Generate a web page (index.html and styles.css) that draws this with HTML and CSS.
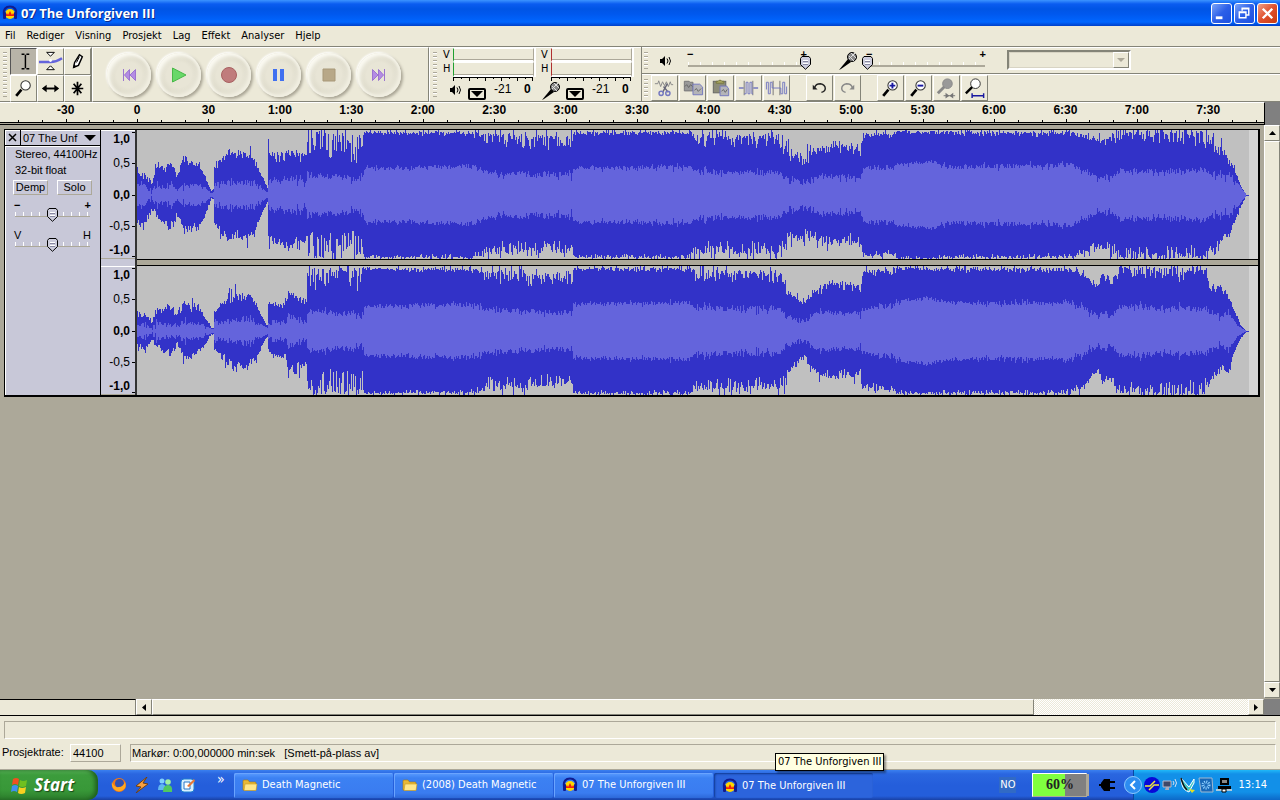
FILE: index.html
```html
<!DOCTYPE html>
<html lang="no">
<head>
<meta charset="utf-8">
<title>07 The Unforgiven III</title>
<link rel="stylesheet" href="styles.css">
</head>
<body>
<svg class="defs" aria-hidden="true">
  <defs>
    <symbol id="audacity" viewBox="0 0 16 16">
      <path d="M2 10C1 4 4 1.500 8 1.500S15 4 14 10" fill="none" stroke="#101c90" stroke-width="2"/>
      <circle cx="8" cy="9" r="5" fill="#ffd800"/>
      <path d="M3 11L5 8L6 10L8 6L10 10L11 8L13 11Z" fill="#f02010"/>
      <rect x="1" y="7" width="3" height="7" rx="1" fill="#101c90"/>
      <rect x="12" y="7" width="3" height="7" rx="1" fill="#101c90"/>
    </symbol>
    <symbol id="speaker" viewBox="0 0 14 14">
      <path d="M1 5h2l3-3v10l-3-3H1z" fill="#000"/>
      <path d="M8 4.500q2 2.500 0 5M10 3q3 4 0 8" fill="none" stroke="#000"/>
    </symbol>
    <symbol id="mic" viewBox="0 0 20 20">
      <path d="M1 19L10 8L13 11L3 18Z" fill="#000"/>
      <circle cx="14" cy="6" r="4.500" fill="#888" stroke="#000"/>
      <path d="M11 5l5 5M13 2l5 5M11 8l6-6" stroke="#ddd" stroke-width="1"/>
    </symbol>
    <symbol id="lens" viewBox="0 0 24 24">
      <path d="M5 19L10 13" stroke="#000" stroke-width="2.500"/>
      <circle cx="14" cy="9" r="4.500" fill="#fff" stroke="#333" stroke-width="1"/>
    </symbol>
    <symbol id="folder" viewBox="0 0 16 16">
      <path d="M1 13V4q0-1 1-1h4l1.500 2H13q1 0 1 1v7z" fill="#e8b838" stroke="#a87808" stroke-width=".6"/>
      <path d="M2 13.500L3 7h12l-1 6.500z" fill="#ffe78a" stroke="#c89a20" stroke-width=".6"/>
    </symbol>
    <symbol id="prev" viewBox="0 0 16 16">
      <path d="M2.500 2v12M8.500 2.500v11L3.500 8zM14.500 2.500v11L9 8z" fill="#b48ce4" stroke="#9c74d0"/>
    </symbol>
  </defs>
</svg>

<div class="app">
  <header class="titlebar">
    <svg class="i16"><use href="#audacity"/></svg>
    <h1>07 The Unforgiven III</h1>
    <button class="win" aria-label="Minimer"><svg viewBox="0 0 20 20"><path d="M4 13h7v3H4z" fill="#fff"/></svg></button>
    <button class="win" aria-label="Gjenopprett"><svg viewBox="0 0 20 20" fill="none" stroke="#fff"><path d="M7.500 7V4.500h7v7H12M7 5h8M4.500 8.500h7v6h-7zM4 9h8" stroke-width="1.500"/></svg></button>
    <button class="win close" aria-label="Lukk"><svg viewBox="0 0 20 20"><path d="M5 5l10 10M15 5L5 15" stroke="#fff" stroke-width="2.500"/></svg></button>
  </header>

  <nav class="menu">
    <button>Fil</button><button>Rediger</button><button>Visning</button><button>Prosjekt</button><button>Lag</button><button>Effekt</button><button>Analyser</button><button>Hjelp</button>
  </nav>

  <section class="toolbars">
    <div class="bar tools">
      <i class="grip"></i>
      <div class="toolgrid">
        <button class="on" aria-label="Merking"><svg viewBox="0 0 26 26"><path d="M11 5.500h3M16 5.500h3M11 20.500h3M16 20.500h3M15 6v14" stroke="#000" stroke-width="1.500"/></svg></button>
        <button aria-label="Konvolutt"><svg viewBox="0 0 26 26"><path d="M9 3.500h8l-4 4zM9 21.500h8l-4-4z" fill="#fff" stroke="#000"/><path d="M1 13.500h12q6 0 12-4" fill="none" stroke="#6464dc" stroke-width="2.500"/><circle cx="13" cy="12" r="1.500" fill="#fff"/></svg></button>
        <button aria-label="Tegn"><svg viewBox="0 0 26 26"><path d="M9 19l1-5 5-8 3 2-4 9z" fill="#fff" stroke="#000" stroke-width="1.500"/><path d="M12 14l3-6" stroke="#000"/><path d="M9 20v-4l3 2z"/></svg></button>
        <button aria-label="Forstørr"><svg viewBox="0 0 26 26"><use href="#lens" width="26" height="26"/></svg></button>
        <button aria-label="Tidsskyv"><svg viewBox="0 0 26 26"><path d="M6 13h14" stroke="#000" stroke-width="2"/><path d="M4 13l5-4v8zM22 13l-5-4v8z"/></svg></button>
        <button aria-label="Multiverktøy"><svg viewBox="0 0 26 26"><path d="M13 6v14M7 13h12M9 8l8 10M17 8l-8 10" stroke="#000" stroke-width="1.800"/></svg></button>
      </div>
    </div>
    <div class="bar transport">
      <button aria-label="Til start"><svg><use href="#prev"/></svg></button>
      <button aria-label="Spill"><svg viewBox="0 0 16 16"><path d="M1.500 1v14L15 8z" fill="#68d868" stroke="#48b848"/></svg></button>
      <button aria-label="Ta opp"><svg viewBox="0 0 16 16"><circle cx="8" cy="8" r="7.500" fill="#c07c7c" stroke="#a86060"/></svg></button>
      <button aria-label="Pause"><svg viewBox="0 0 16 16"><path d="M2 2h4v12H2zM9 2h4v12H9z" fill="#4070f0"/></svg></button>
      <button aria-label="Stopp"><svg viewBox="0 0 16 16"><path d="M2 2h12v12H2z" fill="#b8a888" stroke="#a89878"/></svg></button>
      <button aria-label="Til slutt"><svg class="flip"><use href="#prev"/></svg></button>
    </div>
    <div class="bar meters">
      <i class="grip"></i>
      <div class="meter">
        <span class="ch">V</span><div class="level"></div>
        <span class="ch">H</span><div class="level"></div>
        <svg class="scale" viewBox="0 0 80 4" preserveAspectRatio="none"><path d="M0 .5h80M.5 0v4M16.500 0v4M32.500 0v4M48.500 0v4M64.500 0v4M79.500 0v4M8.500 0v2M24.500 0v2M40.500 0v2M56.500 0v2M72.500 0v2" stroke="#000"/></svg>
        <div class="under"><svg><use href="#speaker"/></svg><button class="drop" aria-label="Avspillingsmåler"><svg viewBox="0 0 12 6"><path d="M0 0h12L6 6z"/></svg></button><span>-21</span><b>0</b></div>
      </div>
      <div class="meter rec">
        <span class="ch">V</span><div class="level"></div>
        <span class="ch">H</span><div class="level"></div>
        <svg class="scale" viewBox="0 0 80 4" preserveAspectRatio="none"><path d="M0 .5h80M.5 0v4M16.500 0v4M32.500 0v4M48.500 0v4M64.500 0v4M79.500 0v4M8.500 0v2M24.500 0v2M40.500 0v2M56.500 0v2M72.500 0v2" stroke="#000"/></svg>
        <div class="under"><svg><use href="#mic"/></svg><button class="drop" aria-label="Opptaksmåler"><svg viewBox="0 0 12 6"><path d="M0 0h12L6 6z"/></svg></button><span>-21</span><b>0</b></div>
      </div>
    </div>
    <div class="stack">
      <div class="bar mixer">
        <i class="grip"></i>
        <svg class="i14 spk"><use href="#speaker"/></svg>
        <label class="slide"><span><b>−</b><b>+</b></span><input type="range" min="0" max="10" value="10" aria-label="Utgangsvolum"></label>
        <svg class="i20 micro"><use href="#mic"/></svg>
        <label class="slide"><span><b>−</b><b>+</b></span><input type="range" min="0" max="10" value="0" aria-label="Inngangsvolum"></label>
        <div class="combo"><select disabled aria-label="Inngangskilde"><option></option></select><i><svg viewBox="0 0 8 4"><path d="M0 0h8L4 4z" fill="#aca899"/></svg></i></div>
      </div>
      <div class="bar edit">
        <i class="grip"></i>
        <button aria-label="Klipp ut"><svg viewBox="0 0 26 26" fill="none"><path d="M3 8h3l1-3 2 6 2-5 2 4 2-4 2 5 2-5 1 3h2" stroke="#888"/><path d="M16 8l-5 9M12 11l5 6" stroke="#667" stroke-width="1.500"/><circle cx="9.500" cy="18" r="2.200" stroke="#7478c0" stroke-width="1.500"/><circle cx="16.500" cy="18" r="2.200" stroke="#7478c0" stroke-width="1.500"/></svg></button>
        <button aria-label="Kopier"><svg viewBox="0 0 26 26"><path d="M4.500 5.500h5l1 1h3v9h-9z" fill="#999" stroke="#777"/><path d="M13.500 8.500h7l3 3v8h-10z" fill="#b4b4b8" stroke="#7478c0"/><path d="M5 11l2-2 2 3 2-3 2 2M15 15l2-2 2 3 3-3" fill="none" stroke="#666"/></svg></button>
        <button aria-label="Lim inn"><svg viewBox="0 0 26 26"><rect x="5.500" y="5.500" width="13" height="12" fill="#8c8c78" stroke="#666"/><path d="M8.500 7.500v-2h2l1-1h2l1 1h2v2z" fill="#aaa860" stroke="#777740"/><path d="M12.500 10.500h7l2 3v7h-9z" fill="#b4b4b8" stroke="#7478c0"/><path d="M14 16l2-2 2 3 2-3" fill="none" stroke="#666"/></svg></button>
        <button aria-label="Beskjær"><svg viewBox="0 0 26 26" fill="none"><path d="M3 12.500h5M18 12.500h5" stroke="#7478c0" stroke-width="1.500"/><path d="M8.500 5v15M17.500 5v15" stroke="#777"/><path d="M8.500 18.500h2v-12h2v12h2v-12h2v12h1" stroke="#7478c0"/></svg></button>
        <button aria-label="Demp lyd"><svg viewBox="0 0 26 26" fill="none"><path d="M9.500 5v15M16.500 5v15" stroke="#777"/><path d="M2.500 14V6.500h2v12h2v-12h2v6h9v6h2v-12h2v12h2V11" stroke="#7478c0"/></svg></button>
        <button class="gap" aria-label="Angre"><svg viewBox="0 0 26 26" fill="none" stroke="#222" stroke-width="1.500"><path d="M8 12q1-4 6-4 5 1 5 5 0 3-4 4"/><path d="M6 9v5h5z" fill="#222" stroke="none"/></svg></button>
        <button aria-label="Gjør om"><svg viewBox="0 0 26 26" fill="none" stroke="#888" stroke-width="1.500"><path d="M18 12q-1-4-6-4-5 1-5 5 0 3 4 4"/><path d="M20 9v5h-5z" fill="#888" stroke="none"/></svg></button>
        <button class="gap" aria-label="Zoom inn"><svg viewBox="0 0 26 26"><use href="#lens" width="26" height="26"/><path d="M12 10h6M15 7v6" stroke="#1818a0" stroke-width="2"/></svg></button>
        <button aria-label="Zoom ut"><svg viewBox="0 0 26 26"><use href="#lens" width="26" height="26"/><path d="M12 10h6" stroke="#1818a0" stroke-width="2"/></svg></button>
        <button aria-label="Tilpass merking"><svg viewBox="0 0 26 26"><path d="M4 18l7-7" stroke="#888" stroke-width="3"/><circle cx="14" cy="8" r="5" fill="#999" stroke="#888"/><path d="M10 20.500h12" stroke="#777"/><path d="M12 17.500l4 3-4 3zM20 17.500l-4 3 4 3z" fill="#777"/></svg></button>
        <button aria-label="Tilpass prosjekt"><svg viewBox="0 0 26 26"><path d="M4 18l7-7" stroke="#000" stroke-width="2.500"/><circle cx="14" cy="8" r="5" fill="#fff" stroke="#333"/><path d="M10.500 18v5M22.500 18v5M11 20.500h11" stroke="#1818a0" stroke-width="1.500"/></svg></button>
      </div>
    </div>
  </section>

  <div class="timeline">
    <div class="timescale">
      <div class="labels"><span>-30</span><span>0</span><span>30</span><span>1:00</span><span>1:30</span><span>2:00</span><span>2:30</span><span>3:00</span><span>3:30</span><span>4:00</span><span>4:30</span><span>5:00</span><span>5:30</span><span>6:00</span><span>6:30</span><span>7:00</span><span>7:30</span></div>
      <svg id="ticks" viewBox="0 0 1264 5" preserveAspectRatio="none"></svg>
    </div>
  </div>

  <main class="work">
    <div class="tracks">
      <article class="track">
        <aside class="panel">
          <div class="name"><button aria-label="Lukk spor"><svg viewBox="0 0 9 9"><path d="M1 1l7 7M8 1L1 8" stroke="#000" stroke-width="1.500"/></svg></button><button class="title">07 The Unf<svg viewBox="0 0 12 6"><path d="M0 0h12L6 6z"/></svg></button></div>
          <p>Stereo, 44100Hz</p>
          <p>32-bit float</p>
          <div class="pair"><button>Demp</button><button>Solo</button></div>
          <label class="slide"><span><b>−</b><b>+</b></span><input type="range" aria-label="Forsterkning"></label>
          <label class="slide"><span><i>V</i><i>H</i></span><input type="range" aria-label="Panorering"></label>
        </aside>
        <div class="vscale">
          <div><b>1,0</b><span>0,5</span><b>0,0</b><span>-0,5</span><b>-1,0</b></div>
          <div><b>1,0</b><span>0,5</span><b>0,0</b><span>-0,5</span><b>-1,0</b></div>
        </div>
        <div class="waves">
          <svg id="left" viewBox="0 0 1121 129" preserveAspectRatio="none"></svg>
          <svg id="right" viewBox="0 0 1121 129" preserveAspectRatio="none"></svg>
        </div>
      </article>
    </div>
    <div class="vbar"><button aria-label="Opp"><svg viewBox="0 0 7 4"><path d="M0 4h7L3.500 0z"/></svg></button><div class="thumb"></div><button aria-label="Ned"><svg viewBox="0 0 7 4"><path d="M0 0h7L3.500 4z"/></svg></button></div>
  </main>

  <div class="hbar"><div class="blank"></div><button aria-label="Venstre"><svg viewBox="0 0 4 7"><path d="M4 0v7L0 3.500z"/></svg></button><div class="thumb"></div><div class="trough"></div><button aria-label="Høyre"><svg viewBox="0 0 4 7"><path d="M0 0v7l4-3.500z"/></svg></button><div class="corner"></div></div>

  <footer class="status">
    <div class="sunk"></div>
    <div class="row"><label for="rate">Prosjektrate:</label><input id="rate" value="44100"><output class="sunk">Markør: 0:00,000000 min:sek &nbsp; [Smett-på-plass av]</output></div>
  </footer>

  <div class="taskbar">
    <button class="start"><svg viewBox="0 0 20 20"><path d="M3 4q3-2 6 0L8 10q-3-2-6 0z" fill="#f05020"/><path d="M10 5q3 2 7 0l-1 6q-4 2-7 0z" fill="#70c020"/><path d="M2 11q3-2 6 0l-1 6q-3-2-6 0z" fill="#4090f0"/><path d="M9 12q3 2 7 0l-1 6q-4 2-7 0z" fill="#f8d020"/></svg>Start</button>
    <div class="quick">
      <button aria-label="Firefox"><svg viewBox="0 0 16 16"><circle cx="8" cy="8" r="7" fill="#f07818"/><circle cx="8.500" cy="6.500" r="4.500" fill="#3050b0"/><path d="M1 5q2 6 7 5 4 0 6-5 2 5-2 8-5 3-9-1-3-3-2-7z" fill="#ffa820"/></svg></button>
      <button aria-label="Winamp"><svg viewBox="0 0 16 16"><path d="M13 0L2 9l5 1-5 6L14 7 9 6z" fill="#f8a040" stroke="#704010"/></svg></button>
      <button aria-label="Messenger"><svg viewBox="0 0 16 16"><circle cx="5" cy="4" r="2.500" fill="#80d0ff"/><path d="M1 13q0-6 4-6t4 6z" fill="#60b8f0"/><circle cx="11" cy="5" r="2.800" fill="#a0f0a0"/><path d="M6 15q0-7 5-7t4 7z" fill="#50c860"/></svg></button>
      <button aria-label="Vis skrivebord"><svg viewBox="0 0 16 16"><rect x="1" y="2" width="13" height="13" rx="3" fill="#d8f0ff" stroke="#2080d0"/><path d="M4 5h6v7H4z" fill="#fff" stroke="#2878c8"/><path d="M7 9l7-7 1 2-6 6z" fill="#e87838"/></svg></button>
    </div>
    <span class="more">»</span>
    <button class="task"><svg class="i16"><use href="#folder"/></svg>Death Magnetic</button>
    <button class="task"><svg class="i16"><use href="#folder"/></svg>(2008) Death Magnetic</button>
    <button class="task"><svg class="i16"><use href="#audacity"/></svg>07 The Unforgiven III</button>
    <button class="task active"><svg class="i16"><use href="#audacity"/></svg>07 The Unforgiven III<span class="tip">07 The Unforgiven III</span></button>
    <span class="lang">NO</span>
    <div class="battery">60%</div>
    <svg class="plug" viewBox="0 0 16 14"><path d="M0 7h3M11 4h5M11 10h5" stroke="#000" stroke-width="2"/><path d="M2 5l3-4h6v12H5L2 9z"/></svg>
    <div class="tray">
      <button class="expand" aria-label="Vis skjulte ikoner"><svg viewBox="0 0 18 18"><circle cx="9" cy="9" r="8.500" fill="#2c8cf0" stroke="#8cc8ff"/><path d="M11 5L7 9l4 4" fill="none" stroke="#fff" stroke-width="2"/></svg></button>
      <svg viewBox="0 0 16 16"><circle cx="8" cy="8" r="8" fill="#0808d8"/><path d="M1 9h5l5-5M5 13l5-5h5" fill="none" stroke="#f0e840" stroke-width="1.500"/></svg>
      <svg viewBox="0 0 16 16"><path d="M1 4h8v6H1z" fill="#404868" stroke="#bbc"/><path d="M4 10h3v3H3z" fill="#aab"/><path d="M11 4q2 2 0 4M13 2q3 4 0 8" fill="none" stroke="#d8e0f0"/></svg>
      <svg viewBox="0 0 16 16"><path d="M1 1q0 12 8 14l5-9V2L9 10z" fill="#40c8c8" stroke="#fff"/><path d="M1 1q2 8 6 12" stroke="#111" fill="none" stroke-width="1.500"/><path d="M9 12l6 1-3 3z" fill="#e8e020"/></svg>
      <svg viewBox="0 0 16 16"><path d="M1 1h13l1 14H3z" fill="#1868b8" stroke="#a0b8d0"/><circle cx="8" cy="8" r="3" fill="none" stroke="#90d0ff" stroke-dasharray="1 1" stroke-width="3"/></svg>
      <svg viewBox="0 0 16 16"><path d="M4 1h9v7H4zM2 9h13v3H2z"/><path d="M6 3h5v3H6z" fill="#888"/><path d="M0 13h16" stroke="#ddd" stroke-width="1.500"/><path d="M6 12h4v3H6z" fill="#fff" stroke="#000"/></svg>
      <time>13:14</time>
    </div>
  </div>
</div>
<script src="wave.js"></script>
</body>
</html>
```

FILE: styles.css
```css
* { box-sizing: border-box; }
html, body { height: 100%; margin: 0; }
body { font: 11px/14px "DejaVu Sans Condensed", "Noto Sans", sans-serif; color: #000; }
button, input, select { font: inherit; color: inherit; margin: 0; padding: 0; border: 0; background: none; border-radius: 0; }
svg { display: block; flex: none; }
i { font-style: normal; }
.defs { position: absolute; width: 0; height: 0; }
.i14 { width: 14px; height: 14px; }
.i16 { width: 16px; height: 16px; }
.i20 { width: 20px; height: 20px; }

.app { height: 100vh; min-width: 1130px; display: flex; flex-direction: column; background: #ece9d8; overflow: hidden; }

.titlebar { height: 26px; flex: none; display: flex; align-items: center; gap: 2px; padding: 0 2px; background: linear-gradient(#3c94ff 0, #0a5cf0 4px, #0055e5 9px, #0058ee 14px, #0066ff 22px, #003fc8 26px); }
.titlebar h1 { flex: 1; margin: 0; padding-left: 1px; font: bold 13px/20px "Open Sans", sans-serif; color: #fff; text-shadow: 1px 1px #0a2a8c; }
.win { width: 21px; height: 21px; border: 1px solid #fff; border-radius: 3px; background: linear-gradient(135deg, #7ba4f8, #2c5fe8 50%, #1c50e0); }
.win svg { width: 19px; height: 19px; }
.close { background: linear-gradient(135deg, #f0a088, #e0502c 50%, #c83c10); }

.menu { height: 20px; flex: none; display: flex; align-items: center; }
.menu button { padding: 0 5px 0 6px; }
.menu button:first-child { padding-left: 5px; }

.toolbars { height: 56px; flex: none; display: flex; border-top: 1px solid #848478; }
.bar { display: flex; border-top: 1px solid #fff; border-bottom: 1px solid #848478; }
.grip { width: 4px; margin: 4px 3px; flex: none; background: repeating-linear-gradient(#aca899 0 1px, #fff 1px 2px, transparent 2px 4px); }
.tools { border-right: 1px solid #848478; }
.toolgrid { display: grid; grid-template-columns: repeat(3, 27px); grid-template-rows: 27px 27px; }
.toolgrid button, .edit button { border: 1px solid; border-color: #fff #848478 #848478 #fff; }
.toolgrid .on { background: #b8b4a8; border-color: #555 #fff #fff #555; }
.toolgrid svg { width: 25px; height: 25px; }

.transport { width: 337px; flex: none; border-left: 1px solid #fff; border-right: 1px solid #848478; align-items: center; gap: 6px; padding-left: 14px; }
.transport button { width: 44px; height: 44px; flex: none; border-radius: 50%; display: grid; place-items: center; background: radial-gradient(#e8e5d6 40%, #dedbcb 60%, #eeebdd 75%); box-shadow: inset 3px 3px 4px #fbfaf2, inset -3px -3px 4px #f1efe2, 2px 2px 3px #a8a494, -1px -1px 2px #fff; }
.transport svg { width: 16px; height: 16px; }
.transport .flip { transform: scaleX(-1); }

.meters { width: 212px; flex: none; border-left: 1px solid #fff; }
.meter { width: 98px; display: grid; grid-template-columns: 10px 81px; grid-template-rows: 14px 15px 4px 21px; padding-left: 3px; }
.meter .ch { line-height: 14px; }
.level { border: 1px solid; border-color: #fff #aca899 #fff #20a030; box-shadow: 2px 0 #fff; border-bottom-width: 2px; background: linear-gradient(#aca899, #aca899) bottom / 100% 1px no-repeat; }
.rec .level { border-left-color: #b03030; }
.scale { grid-column: 2; width: 80px; height: 4px; }
.under { grid-column: 1 / 3; display: flex; align-items: flex-start; font: 12px/17px "Liberation Sans", sans-serif; }
.under > svg { width: 14px; height: 14px; margin: 2px 0 0 6px; }
.rec .under > svg { width: 20px; height: 20px; margin: 0; }
.drop { width: 18px; height: 12px; border: 2px solid #000; border-radius: 2px; margin: 7px 8px 0 5px; padding: 1px; background: #ece9d8; }
.under span { width: 30px; }

.stack { flex: 1; border-left: 1px solid #848478; }
.stack .bar { height: 27px; align-items: stretch; }
.mixer .grip, .edit .grip { margin-left: 2px; }
.spk { margin: 6px 10px 0 8px; }
.micro { margin: 3px 0 0 27px; }
.slide { display: block; width: 128px; position: relative; }
.slide span { display: flex; justify-content: space-between; padding: 0 4px; height: 10px; line-height: 13px; }
.slide b { font: bold 11px/13px "Liberation Sans", sans-serif; }
.slide input { display: block; appearance: none; width: 100%; height: 14px; margin-top: -2px; background:
  repeating-linear-gradient(90deg, #fff 0 1px, transparent 1px 12px) 5px 6px / 118px 3px no-repeat,
  linear-gradient(#aca899, #aca899) 5px 9px / 118px 2px no-repeat; }
.slide input::-webkit-slider-thumb { appearance: none; width: 11px; height: 14px; background: url("data:image/svg+xml,%3Csvg xmlns='http://www.w3.org/2000/svg' viewBox='0 0 11 14'%3E%3Cpath d='M2 .5h7l1.500 2v6L5.500 13.300.5 8.500v-6z' fill='%23ccccdc' stroke='%23000'/%3E%3Cpath d='M3 4.500h5M3 7.500h5' stroke='%23fff'/%3E%3Cpath d='M3 5.500h5M3 8.500h5' stroke='%238888a0'/%3E%3C/svg%3E"); }
.micro + .slide { margin-left: 4px; }
.combo { width: 124px; height: 20px; margin: 2px 0 0 17px; position: relative; }
.combo select { appearance: none; width: 100%; height: 100%; border: 2px solid; border-color: #848478 #fff #fff #848478; outline: 1px solid #d8d4c4; outline-offset: -3px; opacity: 1; }
.combo i { position: absolute; right: 2px; top: 2px; width: 16px; height: 16px; border: 1px solid; border-color: #fff #848478 #848478 #fff; display: grid; place-items: center; }
.combo svg { width: 8px; height: 4px; }
.stack .edit { height: 28px; }
.edit .grip { margin-right: 3px; }
.edit button { width: 27px; margin-right: 1px; }
.edit .gap { margin-left: 15px; }
.edit svg { width: 25px; height: 25px; }

.timeline { height: 23px; flex: none; display: flex; padding-right: 15px; background: #808080; }
.timescale { flex: 1; border-top: 1px solid #fff; border-right: 1px solid #000; border-bottom: 1px solid #000; background: #ece9d8; box-shadow: inset 0 -1px #aca899; display: flex; flex-direction: column; }
.labels { flex: 1; display: flex; padding: 0 20px 0 30px; font: bold 12px/15px "Liberation Sans", sans-serif; }
.labels span { flex: 1; text-align: center; }
#ticks { width: 100%; height: 5px; margin-bottom: 1px; border-bottom: 1px solid #000; }

.work { flex: 1; min-height: 0; display: flex; background: #aca899; }
.tracks { flex: 1; padding: 4px 4px 0; }
.track { display: flex; border: 1px solid #000; border-right-width: 2px; border-bottom-width: 2px; background: #c8c8d8; font-family: "Liberation Sans", sans-serif; }
.panel { width: 96px; border-right: 1px solid #000; box-shadow: inset 1px 1px #fff; }
.name { height: 16px; display: flex; border-bottom: 1px solid #000; box-shadow: 0 1px #fff; }
.name button { width: 16px; border-right: 1px solid #000; padding: 3px; }
.name svg { width: 9px; height: 9px; }
.name .title { flex: 1; display: flex; align-items: center; justify-content: space-between; padding: 0 4px 0 2px; border: 0; line-height: 14px; }
.title svg { width: 12px; height: 6px; }
.panel p { margin: 0 0 0 10px; line-height: 16px; white-space: nowrap; }
.pair { display: flex; gap: 9px; margin: 2px 8px 4px; }
.pair button { width: 35px; height: 15px; line-height: 13px; border: 1px solid; border-color: #fff #aca899 #aca899 #fff; }
.panel .slide { width: 85px; margin: 0 0 7px 5px; }
.panel .slide input { background:
  repeating-linear-gradient(90deg, #fff 0 1px, transparent 1px 8px) 5px 4px / 73px 4px no-repeat,
  linear-gradient(#aca899, #aca899) 5px 8px / 75px 1px no-repeat; margin-top: -1px; }
.vscale { width: 36px; display: grid; grid-template-rows: 129px 129px; gap: 7px; border-right: 2px solid #333; }
.vscale div { display: grid; grid-template-rows: 1fr 2fr 2fr 2fr 1fr; align-items: center; text-align: right; font-size: 12px; border-top: 1px solid #fff; border-bottom: 1px solid #aca899; }
.vscale b, .vscale span { padding-right: 5px; position: relative; }
.vscale b::after, .vscale span::after { content: ""; position: absolute; right: 0; top: 50%; width: 3px; height: 1px; background: #000; }
.vscale b:first-child::after { top: 0; }
.vscale b:last-child::after { top: auto; bottom: 0; }
.waves { flex: 1; display: grid; grid-template-rows: 129px 129px; gap: 7px; background: linear-gradient(#000 0 1px, #aca899 1px 6px, #000 6px) 0 129px / 100% 7px no-repeat; }
.waves svg { width: 100%; height: 129px; background: #c0c0c0; }

.vbar { width: 16px; display: flex; flex-direction: column; padding-bottom: 1px; }
.vbar button, .hbar button, .thumb { border: 1px solid; border-color: #fff #848478 #848478 #fff; background: #ece9d8; flex: none; display: grid; place-items: center; }
.vbar button { height: 16px; }
.vbar svg { width: 7px; height: 4px; }
.vbar .thumb { flex: 1; }
.hbar { height: 17px; flex: none; display: flex; border-bottom: 1px solid #000; }
.hbar button { width: 16px; }
.hbar svg { width: 4px; height: 7px; }
.blank { width: 136px; border-top: 1px solid #000; border-right: 1px solid #848478; }
.hbar .thumb { flex: 882; }
.trough { flex: 214; background: repeating-conic-gradient(#fff 0 25%, #ece9d8 0 50%) 0 0 / 2px 2px; }
.corner { width: 16px; background: #808080; }

.status { flex: none; padding: 5px 4px 7px; border-bottom: 1px solid #aca899; font-family: "Liberation Sans", sans-serif; display: grid; gap: 5px; }
.sunk { height: 18px; border: 1px solid; border-color: #aca899 #fff #fff #aca899; }
.row { display: flex; line-height: 17px; }
.row label { width: 66px; margin-left: -2px; margin-right: 2px; }
.row input { width: 51px; height: 18px; padding-left: 2px; border: 1px solid; border-color: #fff #aca899 #aca899 #fff; margin-right: 9px; }
.row output { flex: 1; padding-left: 1px; line-height: 16px; }

.taskbar { height: 30px; flex: none; display: flex; align-items: center; color: #fff; background: linear-gradient(#3a80f0 0, #2a66e0 4px, #245edb 15px, #245edb 26px, #1941a5 30px); }
.start { align-self: stretch; width: 98px; display: flex; align-items: center; gap: 4px; padding-left: 10px; border-radius: 0 10px 10px 0; background: linear-gradient(#5cb85c 0, #3c9c3c 5px, #389838 20px, #2c7c2c 30px); box-shadow: inset -3px 0 4px #1f5e1f; font: italic bold 17px/28px "Open Sans", sans-serif; text-shadow: 1px 1px 1px #184818; }
.start svg { width: 20px; height: 20px; }
.quick { display: flex; gap: 7px; margin-left: 13px; }
.quick svg { width: 16px; height: 16px; }
.more { width: 17px; margin: -12px 0 0 21px; font-size: 14px; }
.task { width: 159px; height: 25px; margin: 0 1px 0 0; padding-left: 8px; display: flex; align-items: center; gap: 4px; border-radius: 2px; background: linear-gradient(#5a9cff, #3c81f3 5px, #3a7cf0 20px, #2d68d8); box-shadow: inset 1px 1px #6aa4ff; white-space: nowrap; position: relative; }
.active { background: #2c64dc; box-shadow: inset 1px 1px 2px #103a90; padding-top: 2px; }
.tip { position: absolute; left: 61px; top: -20px; padding: 1px 2px; border: 1px solid #000; background: #ffffe1; color: #000; box-shadow: 2px 2px 2px #0006; }
.lang { margin-left: auto; padding: 1px 1px; background: #316ac5; }
.battery { width: 55px; height: 24px; margin: 0 3px 0 16px; border: 1px solid #fff; border-color: #fff #aca899 #aca899 #fff; background: linear-gradient(90deg, #80ff40 60%, #808080 60%); box-shadow: 3px 0 0 -1px #aca899; color: #222; text-align: center; font: bold 14px/22px "Liberation Serif", serif; }
.plug { width: 16px; height: 14px; margin: 0 18px 0 9px; }
.tray { align-self: stretch; display: flex; align-items: center; gap: 2px; padding-right: 13px; background: linear-gradient(#20b8f8 0, #1290e8 4px, #1290e8 22px, #0c68c8 30px); border-left: 1px solid #0a48a0; }
.tray > svg { width: 16px; height: 16px; }
.expand { margin-left: -10px; }
.expand svg { width: 18px; height: 18px; }
.tray time { margin-left: 4px; }
```

FILE: wave.js
```js
var seed = 7;
function rnd() {
  seed = (seed * 16807) % 2147483647;
  return seed / 2147483647;
}

// Rows: x, peak above zero, peak below zero, RMS, roughness.
var loud = [
  [573, 62, 62, 27, 3], [690, 62, 62, 28, 4], [696, 58, 57, 23, 12], [779, 58, 57, 22, 12]
];
var leftEnv = [
  [137, 25, 26, 12, 8], [145, 22, 28, 10, 8], [152, 12, 15, 5, 3], [156, 30, 20, 8, 6], [163, 26, 27, 9, 7],
  [169, 33, 35, 9, 8], [177, 20, 20, 6, 4], [184, 40, 33, 9, 8], [191, 31, 34, 9, 8], [198, 31, 32, 10, 6],
  [204, 19, 21, 6, 4], [211, 4, 4, 2, 1], [213, 5, 4, 2, 1], [214, 27, 27, 11, 4], [220, 34, 36, 11, 6], [228, 42, 43, 12, 8],
  [237, 40, 42, 13, 8], [246, 43, 43, 13, 8], [254, 35, 37, 11, 5], [261, 20, 20, 7, 2], [267, 7, 6, 3, 1],
  [268, 54, 44, 13, 6], [269, 41, 46, 13, 8], [280, 40, 49, 13, 9], [288, 45, 52, 17, 9], [300, 40, 45, 14, 9], [306, 40, 44, 13, 6],
  [307, 62, 63, 20, 28], [340, 60, 60, 18, 26], [357, 58, 58, 16, 30], [362, 56, 56, 18, 30], [364, 62, 62, 26, 3],
  [470, 62, 62, 29, 4], [483, 59, 59, 24, 8], [487, 59, 57, 22, 13], [572, 57, 54, 20, 14]
].concat(loud, [
  [784, 46, 48, 18, 12], [790, 44, 42, 15, 12], [805, 38, 40, 12, 12], [812, 44, 42, 17, 8], [828, 50, 47, 19, 9],
  [860, 47, 46, 18, 10], [863, 60, 60, 27, 4], [894, 61, 59, 28, 5], [896, 63, 63, 30, 3], [930, 63, 63, 34, 3],
  [945, 62, 62, 28, 4], [1070, 62, 62, 30, 4], [1085, 58, 56, 23, 5], [1097, 54, 51, 18, 5], [1110, 55, 53, 18, 8],
  [1120, 63, 62, 24, 11], [1206, 62, 62, 24, 16], [1209, 54, 56, 22, 8], [1220, 45, 46, 20, 9], [1230, 32, 38, 17, 5],
  [1236, 21, 22, 12, 3], [1241, 8, 10, 7, 1], [1246, 0.5, 0.5, 0, 0], [1249, 0.5, 0.5, 0, 0]
]);
var rightEnv = [
  [137, 17, 16, 8, 6], [145, 16, 16, 6, 5], [152, 9, 9, 3, 2], [156, 20, 14, 7, 5], [163, 20, 19, 7, 5],
  [169, 25, 24, 7, 6], [177, 14, 14, 5, 3], [184, 30, 25, 9, 7], [191, 23, 23, 7, 6], [198, 25, 22, 7, 5],
  [204, 14, 14, 5, 3], [211, 3, 3, 2, 1], [213, 3, 3, 2, 1], [214, 18, 18, 8, 4], [228, 34, 34, 11, 8],
  [246, 36, 36, 12, 8], [254, 30, 30, 10, 5], [261, 15, 15, 6, 2], [267, 5, 5, 3, 1],
  [268, 27, 20, 8, 5], [280, 26, 25, 9, 6], [286, 28, 28, 9, 6], [288, 38, 40, 16, 8], [300, 33, 36, 10, 8], [306, 32, 33, 9, 6],
  [307, 62, 62, 20, 24], [357, 60, 60, 17, 26], [362, 55, 55, 17, 28], [364, 62, 62, 25, 3],
  [470, 61, 61, 26, 4], [483, 58, 59, 23, 8], [487, 58, 57, 21, 12], [572, 55, 52, 18, 14]
].concat(loud, [
  [784, 46, 50, 16, 14], [790, 34, 36, 13, 6], [805, 28, 27, 9, 4], [812, 38, 38, 17, 6], [828, 48, 46, 18, 9],
  [860, 46, 45, 18, 10], [863, 59, 57, 23, 7], [894, 60, 58, 25, 7], [896, 63, 62, 29, 3], [930, 62, 62, 33, 3],
  [945, 62, 62, 28, 4], [1070, 61, 61, 28, 4], [1085, 54, 53, 22, 6], [1098, 45, 38, 14, 4], [1102, 56, 52, 20, 6],
  [1110, 50, 46, 15, 5], [1120, 62, 61, 25, 12], [1206, 62, 62, 22, 16], [1209, 42, 52, 20, 5], [1220, 44, 36, 15, 7],
  [1228, 35, 40, 18, 4], [1235, 17, 18, 8, 2], [1241, 5, 6, 3, 1], [1246, 0.5, 0.5, 0, 0], [1249, 0.5, 0.5, 0, 0]
]);

function edge(peak, rough) {
  return peak - Math.pow(rnd(), 2) * rough + rnd() * Math.min(rough, 6) / 2 + Math.pow(rnd(), 8) * Math.min(rough, 10) * 1.4;
}

function draw(id, env) {
  var peaks = "", rms = "", k = 0, mid = 65;
  for (var x = 137; x < 1249; x++) {
    while (x >= env[k + 1][0]) k++;
    var a = env[k], b = env[k + 1], t = (x - a[0]) / (b[0] - a[0]);
    var v = a.map(function (n, i) { return n + (b[i] - n) * t; });
    var up = edge(v[1], v[4]), down = edge(v[2], v[4]);
    var r = v[3] + (rnd() - 0.5) * Math.min(v[4], 5) * (rnd() > 0.85 ? 2.4 : 1.2);
    var top = Math.max(0, Math.round(mid - up)), bottom = Math.min(129, Math.round(mid + down));
    var h = Math.round(Math.max(0, Math.min(r, up, down)));
    peaks += "M" + (x - 137) + " " + top + "h1V" + Math.max(bottom, top + 1) + "h-1z";
    if (h > 0) rms += "M" + (x - 137) + " " + (mid - h) + "h1v" + 2 * h + "h-1z";
  }
  document.getElementById(id).innerHTML =
    '<path fill="#d4d4d4" d="M1112 0h9v129h-9z"/>' +
    '<path fill="#3232c8" shape-rendering="crispEdges" d="' + peaks + '"/>' +
    '<path fill="#6464dc" shape-rendering="crispEdges" d="' + rms + '"/>';
}
draw("left", leftEnv);
draw("right", rightEnv);

var marks = "";
for (var n = -5; n <= 47; n++) {
  var tx = Math.round(137 + n * 23.81);
  marks += "M" + tx + " " + (n % 3 ? 3 : 1) + "h1V5h-1z";
}
document.getElementById("ticks").innerHTML = '<path shape-rendering="crispEdges" d="' + marks + '"/>';
```
